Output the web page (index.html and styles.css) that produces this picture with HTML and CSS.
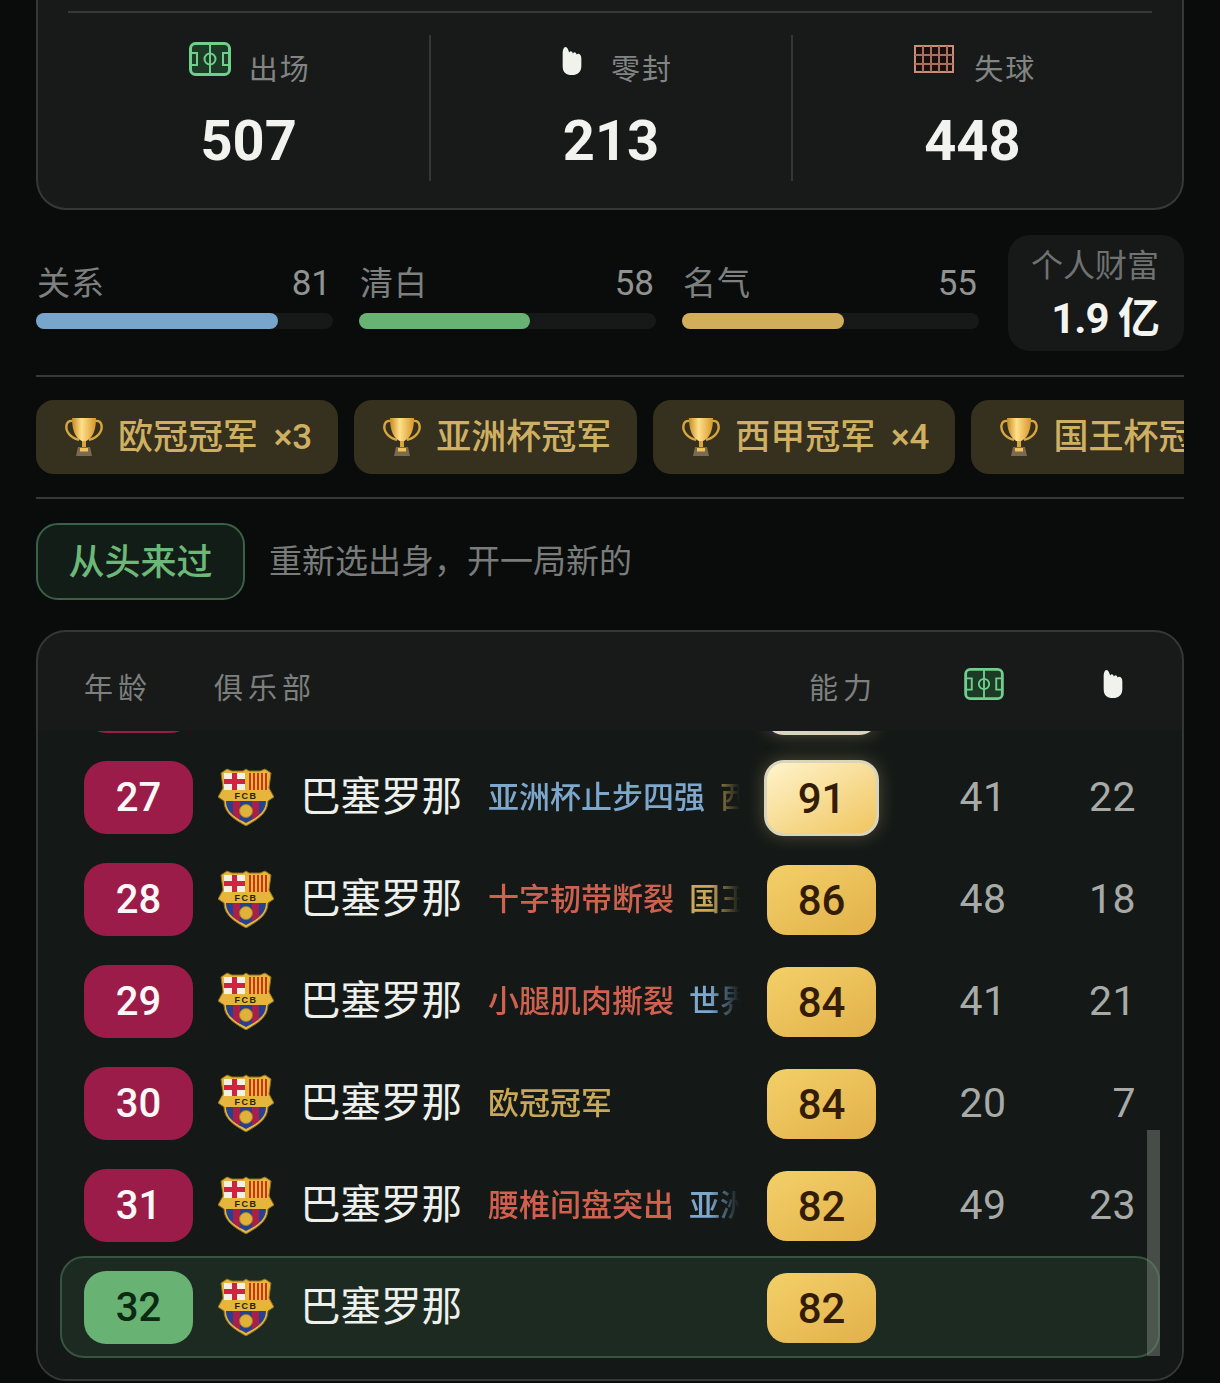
FILE: index.html
```html
<!DOCTYPE html>
<html lang="zh-CN">
<head>
<meta charset="utf-8">
<title>生涯总览</title>
<link rel="stylesheet" href="styles.css">
</head>
<body>
<svg class="defs" aria-hidden="true">
  <defs>
    <linearGradient id="cupGold" x1="0" x2="1" y1="0" y2="0">
      <stop offset="0" stop-color="#c98a22"/><stop offset=".4" stop-color="#ffe08a"/><stop offset="1" stop-color="#d9962a"/>
    </linearGradient>
    <clipPath id="lowerShield"><path d="M8 33H48C48 45 37 50 28 55C19 50 8 45 8 33Z"/></clipPath>
    <symbol id="pitch" viewBox="0 0 42 34">
      <rect x="1.5" y="1.5" width="39" height="31" rx="5" fill="#1d3a27" stroke="#6fd08c" stroke-width="3"/>
      <path d="M21 2V32M2 11H8V23H2M40 11H34V23H40" fill="none" stroke="#6fd08c" stroke-width="2"/>
      <circle cx="21" cy="17" r="5.5" fill="none" stroke="#6fd08c" stroke-width="2"/>
    </symbol>
    <symbol id="hand" viewBox="0 0 22 30">
      <path d="M1 8C1 3 2 0 4 0C6 0 7 3 8 6C9 4 11 4 12 7C13 5 15 5 16 8C18 6 21 8 21 12V20C21 27 17 30 11 30C4 30 1 27 1 20Z" fill="#f2f2ec"/>
    </symbol>
    <symbol id="goal" viewBox="0 0 40 28">
      <rect x="1" y="1" width="38" height="26" fill="#1a0f0c" stroke="#c98d78" stroke-width="2"/>
      <path d="M9 1V27M17 1V27M25 1V27M33 1V27M1 10H39M1 19H39" fill="none" stroke="#a8705f" stroke-width="2"/>
    </symbol>
    <symbol id="trophy" viewBox="0 0 40 40">
      <path d="M9 4C1 3 1 12 5 17C8 21 12 22 15 23M31 4C39 3 39 12 35 17C32 21 28 22 25 23" fill="none" stroke="#d9a63c" stroke-width="2.4"/>
      <path d="M8 1H32C32 13 29 22 20 25C11 22 8 13 8 1Z" fill="url(#cupGold)"/>
      <rect x="18" y="24" width="4" height="6" fill="#d9a63c"/>
      <path d="M14 30H26L28 39H12Z" fill="#7c6a50"/>
      <rect x="16" y="31" width="8" height="3.5" fill="#f0c45c"/>
    </symbol>
    <symbol id="crest" viewBox="0 0 56 58">
      <path d="M3 5L9 1L14 3H25L28 1L31 3H42L47 1L53 5L51 20L56 29L50 33C50 46 38 52 28 58C18 52 6 46 6 33L0 29L5 20Z" fill="#e5b53c" stroke="#8a6a1e"/>
      <rect x="6" y="5" width="21" height="17" fill="#f4f0e6"/>
      <path d="M14 5H19V22H14ZM6 11H27V16H6Z" fill="#cf2340"/>
      <rect x="29" y="5" width="21" height="17" fill="#efb92c"/>
      <path d="M31 5H33V22H31ZM35 5H37V22H35ZM39 5H41V22H39ZM43 5H45V22H43ZM47 5H49V22H47Z" fill="#c8302a"/>
      <text x="28" y="31" class="crest-text">FCB</text>
      <g clip-path="url(#lowerShield)">
        <rect x="8" y="33" width="40" height="24" fill="#27408f"/>
        <path d="M15 33H22V56H15ZM34 33H41V56H34Z" fill="#a81f4c"/>
      </g>
      <circle cx="28" cy="43" r="6.5" fill="#e0b23a" stroke="#a87e1e"/>
    </symbol>
  </defs>
</svg>

<main class="page">
  <section class="summary">
    <div class="rule rule--inner"></div>
    <div class="stats">
      <div class="stat">
        <div class="stat-head stat-head--pitch"><svg class="ico-pitch"><use href="#pitch"/></svg><span class="stat-label">出场</span></div>
        <div class="stat-value">507</div>
      </div>
      <div class="stat">
        <div class="stat-head stat-head--hand"><svg class="ico-hand ico-hand--top"><use href="#hand"/></svg><span class="stat-label">零封</span></div>
        <div class="stat-value">213</div>
      </div>
      <div class="stat">
        <div class="stat-head stat-head--goal"><svg class="ico-goal"><use href="#goal"/></svg><span class="stat-label">失球</span></div>
        <div class="stat-value">448</div>
      </div>
    </div>
  </section>

  <section class="meters">
    <div class="meter">
      <div class="meter-line"><span>关系</span><span class="meter-num">81</span></div>
      <div class="track"><div class="fill fill--blue" style="width:81.5%"></div></div>
    </div>
    <div class="meter">
      <div class="meter-line"><span>清白</span><span class="meter-num">58</span></div>
      <div class="track"><div class="fill fill--green" style="width:57.5%"></div></div>
    </div>
    <div class="meter">
      <div class="meter-line"><span>名气</span><span class="meter-num">55</span></div>
      <div class="track"><div class="fill fill--gold" style="width:54.5%"></div></div>
    </div>
    <div class="wealth">
      <div class="wealth-label">个人财富</div>
      <div class="wealth-value">1.9 亿</div>
    </div>
  </section>

  <div class="rule rule--a"></div>

  <section class="chips">
    <div class="chip"><svg class="ico-trophy"><use href="#trophy"/></svg><span class="chip-text">欧冠冠军 ×3</span></div>
    <div class="chip"><svg class="ico-trophy"><use href="#trophy"/></svg><span class="chip-text">亚洲杯冠军</span></div>
    <div class="chip"><svg class="ico-trophy"><use href="#trophy"/></svg><span class="chip-text">西甲冠军 ×4</span></div>
    <div class="chip"><svg class="ico-trophy"><use href="#trophy"/></svg><span class="chip-text">国王杯冠军</span></div>
  </section>

  <div class="rule rule--b"></div>

  <section class="restart">
    <button class="restart-btn" type="button">从头来过</button>
    <span class="restart-note">重新选出身，开一局新的</span>
  </section>

  <section class="table">
    <div class="table-head">
      <span class="th th--age">年龄</span>
      <span class="th th--club">俱乐部</span>
      <span class="th th--rating">能力</span>
      <span class="col-a"><svg class="ico-pitch ico-pitch--small"><use href="#pitch"/></svg></span>
      <span class="col-b"><svg class="ico-hand"><use href="#hand"/></svg></span>
    </div>
    <div class="rows">
      <div class="row row--prev">
        <span class="age"></span>
        <span class="crest-slot"></span>
        <span class="club"></span>
        <span class="events"></span>
        <span class="rating rating--best"></span>
      </div>
      <div class="row">
        <span class="age">27</span>
        <svg class="crest"><use href="#crest"/></svg>
        <span class="club">巴塞罗那</span>
        <span class="events"><span class="ev ev--blue">亚洲杯止步四强</span><span class="ev ev--gold">西</span></span>
        <span class="rating rating--best">91</span>
        <span class="col-a num">41</span>
        <span class="col-b num">22</span>
      </div>
      <div class="row">
        <span class="age">28</span>
        <svg class="crest"><use href="#crest"/></svg>
        <span class="club">巴塞罗那</span>
        <span class="events"><span class="ev ev--red">十字韧带断裂</span><span class="ev ev--gold">国王</span></span>
        <span class="rating">86</span>
        <span class="col-a num">48</span>
        <span class="col-b num">18</span>
      </div>
      <div class="row">
        <span class="age">29</span>
        <svg class="crest"><use href="#crest"/></svg>
        <span class="club">巴塞罗那</span>
        <span class="events"><span class="ev ev--red">小腿肌肉撕裂</span><span class="ev ev--blue">世界</span></span>
        <span class="rating">84</span>
        <span class="col-a num">41</span>
        <span class="col-b num">21</span>
      </div>
      <div class="row">
        <span class="age">30</span>
        <svg class="crest"><use href="#crest"/></svg>
        <span class="club">巴塞罗那</span>
        <span class="events"><span class="ev ev--gold">欧冠冠军</span></span>
        <span class="rating">84</span>
        <span class="col-a num">20</span>
        <span class="col-b num">7</span>
      </div>
      <div class="row">
        <span class="age">31</span>
        <svg class="crest"><use href="#crest"/></svg>
        <span class="club">巴塞罗那</span>
        <span class="events"><span class="ev ev--red">腰椎间盘突出</span><span class="ev ev--blue">亚洲</span></span>
        <span class="rating">82</span>
        <span class="col-a num">49</span>
        <span class="col-b num">23</span>
      </div>
      <div class="row row--current">
        <span class="age age--current">32</span>
        <svg class="crest"><use href="#crest"/></svg>
        <span class="club">巴塞罗那</span>
        <span class="events"></span>
        <span class="rating">82</span>
      </div>
      <div class="scrollbar"></div>
    </div>
  </section>
</main>
</body>
</html>
```

FILE: styles.css
```css
* { box-sizing: border-box; }
html, body { margin: 0; height: 1383px; overflow: hidden; }
body {
  background: #0a0c0c;
  color: #f0f0ec;
  font-family: Roboto, "Noto Sans CJK SC", sans-serif;
}
.defs { position: absolute; width: 0; height: 0; }
.crest-text { font: 700 9px "Liberation Sans", sans-serif; fill: #2a1e08; text-anchor: middle; letter-spacing: 1.5px; }

.page { width: 1220px; padding: 0 36px; }

.rule { height: 2px; background: #363938; }
.rule--inner { margin-bottom: 22px; }
.rule--a { margin-top: 24px; }
.rule--b { margin-top: 23px; }

/* summary card */
.summary {
  height: 210px;
  padding: 11px 30px 0;
  background: #171a19;
  border: 2px solid #343837;
  border-top: 0;
  border-radius: 0 0 30px 30px;
}
.stats { display: grid; grid-template-columns: repeat(3, 1fr); }
.stat {
  height: 146px;
  padding-top: 7px;
  text-align: center;
}
.stat + .stat { border-left: 2px solid #333736; }
.stat-head { display: flex; justify-content: center; gap: 18px; height: 45px; }
.stat-head--pitch { padding-left: 2px; }
.stat-head--hand { gap: 28px; padding-left: 12px; }
.stat-head--goal { gap: 20px; padding-left: 6px; }
.stat-label {
  align-self: flex-end;
  font-size: 29px;
  line-height: 34px;
  letter-spacing: 2px;
  color: #828583;
}
.stat-value {
  margin-top: 24px;
  font-size: 56px;
  line-height: 60px;
  font-weight: 700;
  color: #f2f2ee;
}
.ico-pitch { width: 42px; height: 34px; flex: none; }
.ico-pitch--small { width: 40px; height: 32px; }
.ico-hand { width: 22px; height: 28px; flex: none; }
.ico-hand--top { margin-top: 5px; }
.ico-goal { width: 40px; height: 28px; flex: none; margin-top: 3px; }

/* meters */
.meters { display: flex; margin-top: 25px; }
.meter { width: 297px; padding-top: 31px; margin-right: 26px; }
.meter:nth-child(3) { margin-right: 29px; }
.meter-line {
  display: flex;
  justify-content: space-between;
  height: 34px;
  margin-bottom: 13px;
  padding: 0 2px 0 1px;
  font-size: 33px;
  line-height: 36px;
  letter-spacing: 1px;
  color: #7d807f;
}
.meter-num { font-size: 35px; letter-spacing: 0; color: #919391; }
.track { height: 16px; border-radius: 8px; background: #161918; }
.fill { height: 100%; border-radius: 8px; }
.fill--blue { background: #78a5cb; }
.fill--green { background: #68b274; }
.fill--gold { background: #d2ad5c; }
.wealth {
  width: 176px;
  height: 116px;
  padding: 13px 25px 0 0;
  border-radius: 22px;
  background: #161918;
  text-align: right;
}
.wealth-label { font-size: 32px; line-height: 36px; color: #6f7271; white-space: nowrap; }
.wealth-value { margin-top: 11px; font-size: 42px; line-height: 48px; font-weight: 700; letter-spacing: -1px; color: #f4f4f0; white-space: nowrap; }

/* chips */
.chips { display: flex; gap: 16px; margin-top: 23px; overflow: hidden; }
.chip {
  display: flex;
  flex: none;
  align-items: center;
  gap: 14px;
  height: 74px;
  padding: 0 26px 0 28px;
  border-radius: 18px;
  background: #36301e;
  color: #cfb063;
  font-size: 35px;
  font-weight: 500;
  white-space: nowrap;
}
.chip-text { margin-bottom: 7px; word-spacing: 7px; }
.ico-trophy { width: 40px; height: 40px; flex: none; }

/* restart */
.restart { display: flex; align-items: center; gap: 25px; margin-top: 24px; }
.restart-btn {
  width: 209px;
  height: 77px;
  padding: 0 0 6px;
  border: 2px solid #3a6045;
  border-radius: 22px;
  background: #121d17;
  color: #6cb878;
  font: 500 36px Roboto, "Noto Sans CJK SC", sans-serif;
}
.restart-note { margin: 0 0 6px -1px; font-size: 33px; color: #797c7a; }

/* table */
.table {
  height: 751px;
  margin-top: 30px;
  padding: 0 22px;
  background: #171a19;
  border: 2px solid #333736;
  border-radius: 30px;
  overflow: hidden;
}
.table-head {
  display: flex;
  align-items: center;
  height: 99px;
  padding: 8px 2px 0 24px;
}
.th { font-size: 29px; letter-spacing: 5px; color: #7d807e; white-space: nowrap; }
.th--age { width: 130px; }
.th--club { width: 595px; }
.th--rating { width: 91px; }
.col-a { flex: none; width: 166px; text-align: center; }
.col-b { flex: none; width: 92px; padding-right: 22px; text-align: right; }
.table-head .col-a, .table-head .col-b { display: flex; justify-content: center; margin-top: -4px; }
.table-head .col-a { padding-left: 2px; }
.table-head .col-b { padding: 0 0 0 2px; }

.rows {
  position: relative;
  height: 648px;
  overflow: hidden;
  background: #141917;
  box-shadow: 0 0 0 22px #141917;
  clip-path: inset(0 -22px 0 -22px);
}
.row {
  display: flex;
  align-items: center;
  height: 102px;
  padding-left: 22px;
  border: 2px solid transparent;
  border-radius: 24px;
}
.row .col-a { margin-left: 24px; }
.row--prev { margin-top: -87px; }
.row--prev .age { margin-top: 3px; }
.row--prev .rating { margin-top: 4px; }
.row--current { background: #1d2a22; border-color: #36543f; }

.age {
  flex: none;
  width: 109px;
  height: 73px;
  border-radius: 22px;
  background: #9b1c48;
  color: #fbf7f7;
  font-size: 40px;
  font-weight: 500;
  line-height: 73px;
  text-align: center;
}
.age--current { background: #68b274; color: #0c2a12; }
.crest, .crest-slot { flex: none; width: 56px; height: 58px; margin: 0 26px 0 25px; }
.club {
  flex: none;
  width: 162px;
  font-size: 40.5px;
  line-height: 48px;
  color: #eef0ec;
  white-space: nowrap;
}
.events {
  display: flex;
  flex: none;
  gap: 15px;
  width: 252px;
  margin: 2px 27px 0 26px;
  overflow: hidden;
  font-size: 31px;
  font-weight: 500;
  line-height: 40px;
  white-space: nowrap;
  -webkit-mask-image: linear-gradient(90deg, #000 88%, transparent 100%);
  mask-image: linear-gradient(90deg, #000 88%, transparent 100%);
}
.ev--blue { color: #7ea7cd; }
.ev--red { color: #d0614f; }
.ev--gold { color: #c9a85a; }
.rating {
  flex: none;
  width: 109px;
  height: 70px;
  margin-top: 2px;
  border-radius: 20px;
  background: linear-gradient(150deg, #f3d069 0%, #e2b04a 100%);
  color: #331d06;
  font-size: 42px;
  font-weight: 500;
  line-height: 72px;
  text-align: center;
}
.rating--best {
  width: 115px;
  height: 76px;
  margin: 2px -3px 0;
  border: 3px solid #d9d4bc;
  background: linear-gradient(150deg, #fff4cc 0%, #f0c55f 100%);
  box-shadow: 0 0 18px rgba(240, 210, 130, .28);
  line-height: 72px;
}
.num { font-size: 41px; letter-spacing: .5px; color: #a8aaa8; }
.scrollbar {
  position: absolute;
  top: 399px;
  right: 0;
  width: 13px;
  height: 226px;
  background: rgba(120, 130, 122, .5);
}
```
